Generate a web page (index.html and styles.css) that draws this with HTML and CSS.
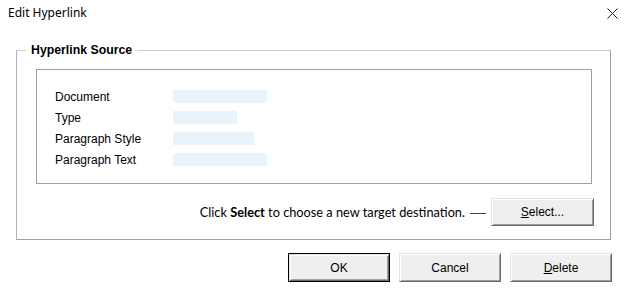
FILE: index.html
```html
<!DOCTYPE html>
<html>
<head>
<meta charset="utf-8">
<link rel="stylesheet" href="styles.css">
</head>
<body>
<div class="dialog">
  <div class="titlebar">
    <span class="title">Edit Hyperlink</span>
    <svg class="close" width="11" height="11" viewBox="0 0 11 11"><path d="M0.5 0.5 L10.5 10.5 M10.5 0.5 L0.5 10.5" stroke="#1a1a1a" stroke-width="1" fill="none"/></svg>
  </div>
  <div class="group">
    <span class="legend">Hyperlink Source</span>
    <div class="inner">
      <div class="fields">
        <span class="label">Document</span><span class="value w94"></span>
        <span class="label">Type</span><span class="value w64"></span>
        <span class="label">Paragraph Style</span><span class="value w81"></span>
        <span class="label">Paragraph Text</span><span class="value w94"></span>
      </div>
    </div>
    <div class="action">
      <span class="hint">Click <b>Select</b> to choose a new target destination.</span>
      <span class="connector"></span>
      <button class="btn btn-select"><u>S</u>elect...</button>
    </div>
  </div>
  <div class="buttons">
    <button class="btn btn-default">OK</button>
    <button class="btn">Cancel</button>
    <button class="btn"><u>D</u>elete</button>
  </div>
</div>
</body>
</html>
```
FILE: styles.css
```css
html, body {
  margin: 0;
  padding: 0;
  background: #ffffff;
}
.dialog {
  width: 624px;
  height: 295px;
  font-family: "Liberation Sans", Arial, sans-serif;
  font-size: 12px;
  color: #000;
}
.titlebar {
  height: 50px;
  display: flex;
  justify-content: space-between;
  align-items: flex-start;
  padding: 5px 6px 0 8px;
  box-sizing: border-box;
}
.title {
  font-family: "Noto Sans", sans-serif;
  font-size: 12px;
  line-height: 16px;
}
.close {
  margin-top: 3px;
}
.group {
  position: relative;
  margin-left: 16px;
  width: 595px;
  height: 190px;
  box-sizing: border-box;
  border: 1px solid #a0a0a0;
  border-top-color: #cdcdcd;
  border-left-color: #b4b4b4;
}
.legend {
  position: absolute;
  left: 9px;
  top: -8px;
  padding: 0 5px;
  background: #fff;
  font-weight: bold;
  font-size: 12.3px;
  line-height: 15px;
}
.inner {
  margin: 18px 0 0 19px;
  width: 556px;
  height: 115px;
  box-sizing: border-box;
  border: 1px solid #a0a0a0;
}
.fields {
  display: grid;
  grid-template-columns: 118px auto;
  grid-auto-rows: 21px;
  align-items: center;
  padding: 16px 0 0 18px;
}
.label {
  line-height: 14px;
}
.value {
  display: block;
  height: 13px;
  background: #e8f3fc;
}
.w94 { width: 94px; }
.w64 { width: 64px; }
.w81 { width: 81px; }
.action {
  display: flex;
  justify-content: flex-end;
  align-items: center;
  margin-top: 14px;
  padding-right: 16px;
}
.hint {
  font-family: "Lato", sans-serif;
  font-size: 12.75px;
}
.hint b {
  font-weight: bold;
}
.connector {
  display: block;
  width: 16px;
  height: 1px;
  background: #444;
  margin: 2px 5px 0 5px;
}
.btn {
  font-family: "Liberation Sans", Arial, sans-serif;
  font-size: 12px;
  color: #000;
  width: 102px;
  height: 29px;
  padding: 0;
  box-sizing: border-box;
  background: #efefef;
  border: 1px solid;
  border-color: #e3e3e3 #696969 #696969 #e3e3e3;
  box-shadow: inset 1px 1px #ffffff, inset -1px -1px #a0a0a0;
}
.btn u {
  text-decoration: underline;
}
.btn-select {
  width: 103px;
  height: 28px;
}
.btn-default {
  border: 1px solid #000;
  box-shadow: inset 1px 1px #e3e3e3, inset -1px -1px #696969, inset 2px 2px #ffffff, inset -2px -2px #a0a0a0;
}
.buttons {
  display: flex;
  justify-content: flex-end;
  gap: 9px;
  margin-top: 13px;
  padding-right: 12px;
}
```
